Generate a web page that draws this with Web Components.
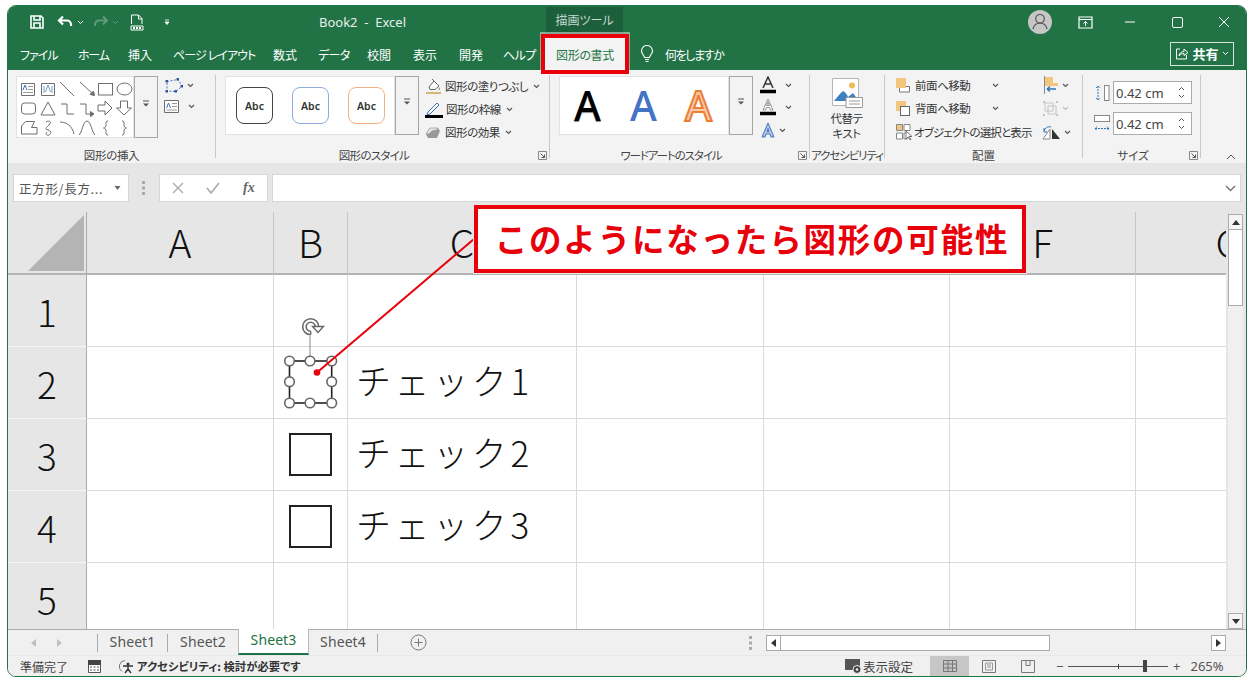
<!DOCTYPE html>
<html lang="ja"><head><meta charset="utf-8"><title>Book2 - Excel</title>
<style>
html,body{margin:0;padding:0;background:#fff;overflow:hidden}
body{font-family:"Noto Sans CJK JP","Noto Sans",sans-serif;font-feature-settings:"palt";color:#333}
</style></head><body>
<x-app>
  <x-titlebar></x-titlebar>
  <x-tabs></x-tabs>
  <x-ribbon>
    <x-group w="208" pl="8" label="図形の挿入" ls="-.3">
      <x-row style="margin-top:1px;align-items:flex-start"><x-gal w="118" h="62"><x-i n="shapes"></x-i></x-gal><x-more h="62"></x-more>
        <x-col style="margin:2px 0 0 6px;gap:7px">
          <x-row><x-i n="editpts"></x-i><x-i n="chev" style="margin-left:3px"></x-i></x-row>
          <x-row><x-i n="textbox"></x-i><x-i n="chev" style="margin-left:9px"></x-i></x-row>
        </x-col></x-row>
    </x-group>
    <x-group w="334" pl="9" label="図形のスタイル" launcher="1" ls="-.7">
      <x-row style="margin-top:1px;align-items:flex-start"><x-gal w="170" h="59"><x-row style="gap:19px;padding:10px 0 0 10px"><x-abc c="#444"></x-abc><x-abc c="#8faadc"></x-abc><x-abc c="#f4b183"></x-abc></x-row></x-gal><x-more h="59"></x-more>
        <x-col style="margin:-1px 0 0 6px;line-height:23px">
          <x-row><x-i n="fill"></x-i><span style="margin:0 5px 0 3px">図形の塗りつぶし</span><x-i n="chev"></x-i></x-row>
          <x-row><x-i n="pen"></x-i><span style="margin:0 5px 0 3px">図形の枠線</span><x-i n="chev"></x-i></x-row>
          <x-row><x-i n="effect"></x-i><span style="margin:0 5px 0 4px">図形の効果</span><x-i n="chev"></x-i></x-row>
        </x-col></x-row>
    </x-group>
    <x-group w="260" pl="9" label="ワードアートのスタイル" launcher="1" ls="-1.1">
      <x-row style="margin-top:1px;align-items:flex-start"><x-gal w="170" h="59"><x-wordart></x-wordart></x-gal><x-more h="59"></x-more>
        <x-col style="margin:0 0 0 7px;gap:4px">
          <x-row><x-i n="afill"></x-i><x-i n="chev" style="margin-left:9px"></x-i></x-row>
          <x-row><x-i n="aline"></x-i><x-i n="chev" style="margin-left:9px"></x-i></x-row>
          <x-row style="margin-top:2px"><x-i n="aeff"></x-i><x-i n="chev" style="margin-left:3px"></x-i></x-row>
        </x-col></x-row>
    </x-group>
    <x-group w="75" pl="0" label="アクセシビリティ" ls="-1.1">
      <x-col style="align-items:center;line-height:15px;margin-top:3px"><x-i n="alt"></x-i><span style="margin-top:3px;text-align:center;margin-right:1px">代替テ<br>キスト</span></x-col>
    </x-group>
    <x-group w="198" pl="11" label="配置" ls="0">
      <x-row style="align-items:flex-start">
        <x-col style="width:146px;line-height:23px;margin-top:-1px">
          <x-row style="height:23px"><x-i n="front"></x-i><span style="margin:0 0 0 5px;width:77px">前面へ移動</span><x-i n="chev"></x-i></x-row>
          <x-row style="height:23px"><x-i n="back"></x-i><span style="margin:0 0 0 5px;width:77px">背面へ移動</span><x-i n="chev"></x-i></x-row>
          <x-row style="height:24px"><x-i n="select"></x-i><span style="margin-left:1px;white-space:nowrap;letter-spacing:-.85px">オブジェクトの選択と表示</span></x-row>
        </x-col>
        <x-col style="gap:3px;margin-top:0">
          <x-row style="height:20px"><x-i n="align"></x-i><x-i n="chev" style="margin-left:3px"></x-i></x-row>
          <x-row style="height:20px"><x-i n="group"></x-i><x-i n="chevd" style="margin-left:3px"></x-i></x-row>
          <x-row style="height:20px;margin-top:1px"><x-i n="rotate"></x-i><x-i n="chev" style="margin-left:3px"></x-i></x-row>
        </x-col>
      </x-row>
    </x-group>
    <x-group w="118" pl="11" label="サイズ" launcher="1" ls="0">
      <x-col style="gap:8px;margin-top:6px">
        <x-row><x-i n="height"></x-i><x-spin style="margin-left:3px">0.42 cm</x-spin></x-row>
        <x-row><x-i n="width"></x-i><x-spin style="margin-left:3px">0.42 cm</x-spin></x-row>
      </x-col>
    </x-group>
    <x-i n="collapse" style="margin:79px 0 0 25px"></x-i>
  </x-ribbon>
  <x-formula></x-formula>
  <x-sheet>
    <x-shape style="left:281px;top:221px"></x-shape>
    <x-shape style="left:281px;top:293px"></x-shape>
    <x-marks></x-marks>
    <x-callout>このようになったら図形の可能性</x-callout>
  </x-sheet>
  <x-sheettabs></x-sheettabs>
  <x-status></x-status>
</x-app>
<script>
const S='fill="none" stroke="#6e6e6e"';
const I={
 save:[16,16,'<path d="M2 2h10l2 2v10H2z M5 2v4h6V2 M5 14V9h6v5" fill="none" stroke="#fff" stroke-width="1.6"/>'],
 undo:[16,14,'<path d="M2 5.5h8a4 4 0 0 1 4 4V11 M6 1.5 2 5.5l4 4" fill="none" stroke="#fff" stroke-width="2.2"/>'],
 redo:[16,14,'<path d="M14 5.5H6a4 4 0 0 0-4 4V11 M10 1.5l4 4-4 4" fill="none" stroke="#5d9c7b" stroke-width="2"/>'],
 chw:[7,5,'<path d="M1 1l2.5 2.5L6 1" fill="none" stroke="#fff" stroke-width="1"/>'],
 chg:[7,5,'<path d="M1 1l2.5 2.5L6 1" fill="none" stroke="#5d9c7b" stroke-width="1"/>'],
 doc:[14,17,'<path d="M1.5 10V1h7l3.5 3.5V10 M8.5 1v4H12" fill="none" stroke="#fff"/><path d="M1 12h12v4H1z" fill="none" stroke="#fff"/><path d="M3 13h2v2H3z M6 13h2v2H6z M9 13h2v2H9z" fill="#fff"/>'],
 qat:[6,7,'<path d="M1 1h4M1 3l2 2.5L5 3z" stroke="#fff" fill="#fff" stroke-width=".8"/>'],
 ropt:[15,13,'<path d="M1 1h13v11H1z M1 3.5h13" fill="none" stroke="#fff" stroke-width="1.2"/><path d="M7.5 10V5.5M5.5 7.5l2-2 2 2" fill="none" stroke="#fff"/>'],
 min:[12,2,'<path d="M1 1h10" stroke="#fff"/>'],
 max:[11,11,'<rect x=".5" y=".5" width="10" height="10" rx="1.5" fill="none" stroke="#fff"/>'],
 close:[12,12,'<path d="M1 1l10 10M11 1 1 11" stroke="#fff" stroke-width="1"/>'],
 user:[24,24,'<circle cx="12" cy="12" r="12" fill="#c6c6c6"/><circle cx="12" cy="8.8" r="4.3" fill="none" stroke="#555" stroke-width="1.2"/><path d="M5 19c1-4 4-6 7-6s6 2 7 6" fill="none" stroke="#555" stroke-width="1.2"/>'],
 bulb:[14,18,'<path d="M4.5 12.5C4 10 1.5 9 1.5 6a5.5 5.5 0 0 1 11 0c0 3-2.5 4-3 6.5z M5 14.5h4 M5.5 16.5h3" fill="none" stroke="#fff" stroke-width="1.1"/>'],
 share:[14,13,'<path d="M5 2H1.5v10h10V8" fill="none" stroke="#fff"/><path d="M4 9c0-3 3-4.5 5-4.5V2l4 3.5-4 3V6.5C7 6.5 5 7 4 9z" fill="none" stroke="#fff"/>'],
 chev:[7,5,'<path d="M1 1l2.5 2.5L6 1" fill="none" stroke="#555" stroke-width="1.1"/>'],
 chevd:[7,5,'<path d="M1 1l2.5 2.5L6 1" fill="none" stroke="#bbb" stroke-width="1.1"/>'],
 shapes:[118,62,`<g ${S}>
  <path d="M4.5 6.5h13v12h-13z" fill="#fff"/><path d="M11 9.5h5M11 12.5h5M6 15.5h10" stroke="#999"/><path d="M6 13l2-5 2 5" stroke="#4472c4"/>
  <path d="M24.5 6.5h13v12h-13z"/><path d="M27 9v7M35 9v7M28.5 15l2.5-7 2.5 7" stroke="#7a9ac8"/>
  <path d="M43 5l14 14M63 5l14 13"/><path d="M77.5 18.5l-4.5-1 3.5-3.5z" fill="#6e6e6e"/>
  <rect x="81.5" y="6.5" width="14" height="11.5"/><ellipse cx="107.5" cy="12" rx="7.5" ry="6"/>
  <rect x="4.5" y="26" width="14" height="11" rx="3"/><path d="M31 25l-7 13h14z"/><path d="M44 27h6v10h7M63 27h6v10h5"/><path d="M77 37l-3.5-2.5v5z" fill="#6e6e6e"/>
  <path d="M81 28h7v-4l7 7-7 7v-4h-7z"/><path d="M103.5 24h7v7h4l-7.5 7-7.5-7h4z"/>
  <path d="M4.5 57v-8l4-4.5h9l-3 6h5.5V57z"/><path d="M29 45c4-2 6 0 3 3s-5 4-1 5 3 4 1 5-4-1-2-3"/><path d="M43 45c7 0 12 4 14 12M62 58c3-2 4-14 8-14s5 12 8 14"/>
  <path d="M91 44c-2.5 0-2 1.5-2 3.5s-.5 3.5-2.5 3.5c2 0 2.5 1.5 2.5 3.5s-.5 3.5 2 3.5M105 44c2.5 0 2 1.5 2 3.5s.5 3.5 2.5 3.5c-2 0-2.5 1.5-2.5 3.5s.5 3.5-2 3.5"/></g>`],
 editpts:[20,15,'<path d="M3 3.5 14 1.5l4 6.5-6 5.5L3 13z" fill="none" stroke="#4472c4" stroke-dasharray="2 1.5"/><g fill="#2f5597"><rect x="1.5" y="2" width="2.5" height="2.5"/><rect x="12.5" y="0" width="2.5" height="2.5"/><rect x="16.5" y="7" width="2.5" height="2.5"/><rect x="10.5" y="12" width="2.5" height="2.5"/><rect x="1.5" y="12" width="2.5" height="2.5"/></g>'],
 textbox:[15,13,'<path d="M.5.5h14v12H.5z" fill="#fff" stroke="#6e6e6e"/><path d="M2.5 8l2-5 2 5" fill="none" stroke="#4472c4"/><path d="M8 3.5h5M8 6.5h5M2.5 10h10.5" stroke="#999"/>'],
 fill:[17,17,'<path d="M4 9l5-6 5 5-4 3.5H5z" fill="#fff" stroke="#666"/><path d="M9 3 7 1" stroke="#666"/><path d="M14 9c1 1.5 1.5 2 1 3-1 .5-1.5-1-1-3z" fill="#888"/><path d="M1 15h15" stroke="#c8a04a" stroke-width="1.5"/>'],
 pen:[18,17,'<path d="M3 11 12 2l2 2-9 9-3 1z" fill="#fff" stroke="#3b6fb6"/><path d="M0 15.5h18" stroke="#000" stroke-width="3"/>'],
 effect:[16,14,'<path d="M5 2h8l2 3-3 7H3L1 8z" fill="#999"/><path d="M5 2h8l-1 2-5 1-3 3-3 0z" fill="#e6e6e6" stroke="#888" stroke-width=".6"/>'],
 afill:[16,18,'<path d="M3 12 8 1l5 11M5 8h6" fill="none" stroke="#333" stroke-width="1.5"/><path d="M0 15.5h16" stroke="#000" stroke-width="3.5"/>'],
 aline:[16,18,'<path d="M3 12 8 1l5 11-2.5 0-1-2.5h-3L5.5 12zM6.5 7.5h3L8 4z" fill="#fff" stroke="#888" stroke-width=".9"/><path d="M0 15.5h16" stroke="#000" stroke-width="3.5"/>'],
 aeff:[16,17,'<path d="M2 15 8 1l6 14h-3l-1-3H6l-1 3zM7 9.5h2L8 6.5z" fill="#b4c7e7" stroke="#4472c4" stroke-width="1"/>'],
 alt:[31,30,'<path d="M.5.5h26v27H.5z" fill="#fff" stroke="#b5b5b5"/><circle cx="20" cy="7.5" r="3" fill="#f0b95c"/><path d="M2 23c3-3 5-7 9-10 2 1 4 3 5 6l5-4 5 7v1H2z" fill="#3f7fc1"/><path d="M14 19.5h16.5v10H14z" fill="#fff" stroke="#9a9a9a"/><path d="M17 23h11M17 26h11" stroke="#9a9a9a"/>'],
 front:[14,15,'<path d="M8 8.5h5.5V14H3.5V9" fill="#fff" stroke="#777"/><rect x="0" y="0" width="10" height="10" fill="#f2c77d"/>'],
 back:[14,15,'<rect x="0" y="0" width="10" height="10" fill="#f2c77d"/><rect x="4.5" y="5.5" width="9" height="9" fill="#fff" stroke="#666"/>'],
 select:[17,16,'<path d="M.5.5h6v6h-6z" fill="#f2c77d" stroke="#888"/><path d="M8 .5h6v6H8zM.5 9h6v6h-6zM8 9h3v6H8z" fill="#fff" stroke="#888"/><path d="M10 7v8l2-2 2 3 1-.5-2-3h3z" fill="#fff" stroke="#555" stroke-width=".8"/>'],
 align:[17,18,'<path d="M2.5 0v18" stroke="#888"/><rect x="3" y="1" width="8" height="6" fill="#f2c77d"/><rect x="3" y="7" width="13" height="3" fill="#f2c77d"/><path d="M5 13h9M5 13l3-2.5M5 13l3 2.5" stroke="#2e75b6" stroke-width="1.5" fill="none"/>'],
 group:[17,17,'<path d="M3 3h8v8H3zM6 6h8v8H6z" fill="none" stroke="#c4c4c4"/><g fill="#c4c4c4"><rect x="1" y="1" width="2" height="2"/><rect x="14" y="1" width="2" height="2"/><rect x="1" y="14" width="2" height="2"/><rect x="14" y="14" width="2" height="2"/></g>'],
 rotate:[19,15,'<path d="M1 14 8 4v10z" fill="#fff" stroke="#888"/><path d="M10 14V4l8 10z" fill="#333"/><path d="M2 6c1-3 4-5 7-4" fill="none" stroke="#2e75b6"/><path d="M2 3v4h3" fill="none" stroke="#2e75b6"/>'],
 height:[16,16,'<path d="M4 1v14M2 3l2-2 2 2M2 13l2 2 2-2" fill="none" stroke="#2e75b6" stroke-dasharray="2 1"/><rect x="10.5" y=".5" width="4.5" height="15" fill="#fff" stroke="#888"/>'],
 width:[16,18,'<rect x=".5" y=".5" width="15" height="6" fill="#fff" stroke="#888"/><path d="M1 13.5h14M3 11.5l-2 2 2 2M13 11.5l2 2-2 2" fill="none" stroke="#2e75b6" stroke-dasharray="2 1"/>'],
 collapse:[10,6,'<path d="M1 5l4-4 4 4" fill="none" stroke="#555"/>'],
 launch:[9,9,'<path d="M.5 8.5V.5h8v8z" fill="none" stroke="#888"/><path d="M2.5 2.5l4 4M3.5 6.5h3v-3" fill="none" stroke="#555"/>'],
 moreic:[8,7,'<path d="M1 1h6" stroke="#555"/><path d="M1 3.5h6L4 6.5z" fill="#555"/>'],
 dn:[7,4,'<path d="M.5 0h6L3.5 4z" fill="#666"/>'],
 dots:[3,16,'<g fill="#aaa"><rect y="1" width="3" height="3"/><rect y="6.5" width="3" height="3"/><rect y="12" width="3" height="3"/></g>'],
 x:[14,14,'<path d="M2 2l10 10M12 2 2 12" stroke="#a8a8a8" stroke-width="1.3"/>'],
 check:[16,14,'<path d="M2 7l4 5 8-10" fill="none" stroke="#a8a8a8" stroke-width="1.6"/>'],
 chevbig:[11,7,'<path d="M1 1l4.5 4.5L10 1" fill="none" stroke="#777" stroke-width="1.5"/>'],
 up:[8,5,'<path d="M4 0l4 5H0z" fill="#333"/>'],
 down:[8,5,'<path d="M0 0h8L4 5z" fill="#333"/>'],
 left:[5,8,'<path d="M5 0v8L0 4z" fill="#333"/>'],
 right:[5,8,'<path d="M0 0v8l5-4z" fill="#333"/>'],
 navl:[5,8,'<path d="M5 0v8L0 4z" fill="#c0c0c0"/>'],
 navr:[5,8,'<path d="M0 0v8l5-4z" fill="#c0c0c0"/>'],
 plus:[17,17,'<circle cx="8.5" cy="8.5" r="7.5" fill="none" stroke="#777"/><path d="M4.5 8.5h8M8.5 4.5v8" stroke="#777"/>'],
 macro:[13,13,'<path d="M.5 2.5h12v10H.5z" fill="#fff" stroke="#555"/><path d="M0 0h13v5H0z" fill="#444"/><path d="M2 7h2M5.5 7h2M9 7h2M2 10h2M5.5 10h2M9 10h2" stroke="#555"/>'],
 acc:[17,15,'<path d="M7 1.5a6 6 0 0 0-3 11" fill="none" stroke="#777"/><circle cx="10" cy="5" r="1.5" fill="#333"/><path d="M5 7h10M10 7v3l-3 4M10 10l3 4" fill="none" stroke="#333" stroke-width="1.4"/>'],
 disp:[17,15,'<path d="M0 0h15v11H0z" fill="#555"/><circle cx="12" cy="10.5" r="4" fill="#444" stroke="#f0f0f0"/><circle cx="12" cy="10.5" r="1.3" fill="#f0f0f0"/>'],
 vnorm:[14,12,'<path d="M.5.5h13v11H.5zM.5 4h13M.5 8h13M5 .5v11M9.5.5v11" fill="none" stroke="#777"/>'],
 vpage:[14,13,'<path d="M.5.5h13v12H.5z" fill="none" stroke="#777"/><path d="M3.5 3h7v7h-7zM5 5h4M5 7h4" fill="none" stroke="#999"/>'],
 vbreak:[14,13,'<path d="M.5 12.5V.5h13v12zM5 .5v5h4v-5" fill="none" stroke="#777"/>']
};
const RED='#e8000a';
const def=(n,css,html)=>customElements.define(n,class extends HTMLElement{
  connectedCallback(){ if(this.shadowRoot) return; const s=this.attachShadow({mode:'open'});
    s.innerHTML='<style>'+css+'</style>'+(typeof html==='function'?html(this):html); }});
const ic=(n,st='')=>`<x-i n="${n}"${st?` style="${st}"`:''}></x-i>`;

def('x-i',':host{display:inline-flex;flex:none;line-height:0}svg{display:block}',h=>{const a=I[h.getAttribute('n')];return `<svg xmlns="http://www.w3.org/2000/svg" width="${a[0]}" height="${a[1]}" viewBox="0 0 ${a[0]} ${a[1]}">${a[2]}</svg>`});
def('x-row',':host{display:flex;align-items:center}','<slot></slot>');
def('x-col',':host{display:flex;flex-direction:column}','<slot></slot>');

def('x-app',`:host{display:flex;flex-direction:column;box-sizing:border-box;width:1240px;height:672px;margin:5px 0 0 7px;border:1px solid #217346;border-radius:9px;overflow:hidden;background:#e6e6e6;position:relative}`,'<slot></slot>');

def('x-titlebar',`:host{display:flex;align-items:center;height:32px;background:#217346;color:#fff;font-size:13px;flex:none}
 .t{font-family:"Noto Sans",sans-serif;white-space:pre;margin-left:149px;width:227px;font-size:13px;color:#e8f0eb}
 .ctx{width:77px;height:31px;align-self:flex-end;background:#1c5f3b;color:#c5d9ce;font-size:12px;display:flex;align-items:center;justify-content:center;padding-bottom:7px;box-sizing:border-box;font-family:"Noto Sans CJK JP",sans-serif}`,
 `<span style="width:21px"></span>${ic('save')}${ic('undo','margin-left:12px')}${ic('chw','margin-left:4px')}${ic('redo','margin-left:9px')}${ic('chg','margin-left:3px')}${ic('doc','margin-left:11px')}${ic('qat','margin-left:20px')}
 <span class="t">Book2  -  Excel</span><span class="ctx">描画ツール</span>
 ${ic('user','margin-left:405px')}${ic('ropt','margin-left:26px')}${ic('min','margin-left:31px')}${ic('max','margin-left:36px')}${ic('close','margin-left:35px')}`);

def('x-tabs',`:host{display:flex;align-items:center;height:32px;background:#217346;color:#fff;font-size:12px;padding-left:12px;flex:none;position:relative;z-index:3}
 span{display:block;white-space:nowrap;padding-top:1px}
 .a{width:84px;height:32px;margin-left:0;background:#f3f3f3;color:#217346;display:flex;align-items:center;justify-content:center;position:relative;box-sizing:border-box;padding:1px 0 0 0;letter-spacing:-.3px}
 .a::after{content:"";position:absolute;left:-2px;right:-2px;top:-4px;bottom:-4px;border:4px solid ${RED};box-shadow:0 -1px 0 1px rgba(255,255,255,.45)}
 .b{margin-left:auto;margin-right:12px;width:64px;height:24px;border:1px solid #d5e3db;box-sizing:border-box;display:flex;align-items:center;justify-content:center;gap:3px;font-size:13px;font-weight:700;margin-top:-1px;padding:0}`,
 ()=>[['ファイル',58,-1],['ホーム',50,-1.2],['挿入',45,0],['ページ レイアウト',100,-.9],['数式',45,0],['データ',49,-.6],['校閲',46,0],['表示',46,0],['開発',44,0],['ヘルプ',40,-.6]].map(([t,w,l])=>`<span style="width:${w}px;letter-spacing:${l}px">${t}</span>`).join('')+
 `<span class="a">図形の書式</span>${ic('bulb','margin-left:13px')}<span style="margin-left:11px;letter-spacing:-1.4px">何をしますか</span><span class="b">${ic('share')}共有${ic('chw')}</span>`);

def('x-ribbon',`:host{display:flex;align-items:flex-start;height:93px;background:#f3f3f3;flex:none;padding-top:5px;box-sizing:border-box;color:#333}`,'<slot></slot>');

def('x-group',`:host{display:flex;flex-direction:column;height:83px;box-sizing:border-box;border-right:1px solid #c8c8c8;flex:none;font-size:11.5px;letter-spacing:-.45px}
 .c{flex:1;min-height:0} .l{font-size:11.5px;line-height:16px;height:16px;margin:0 -1px -5px -1px;text-align:center;position:relative;white-space:nowrap;color:#444}
 .l x-i{position:absolute;right:3px;top:4px}`,
 h=>`<style>:host{width:${h.getAttribute('w')}px}.c{padding-left:${h.getAttribute('pl')}px}.l{letter-spacing:${h.getAttribute('ls')||0}px;${h.getAttribute('launcher')?'padding-right:17px;':''}}</style><div class="c"><slot></slot></div><div class="l">${h.getAttribute('label')}${h.getAttribute('launcher')?ic('launch'):''}</div>`);

def('x-gal',`:host{display:block;background:#fff;border:1px solid #e2e2e2;box-sizing:border-box;flex:none;overflow:hidden}`,
 h=>`<style>:host{width:${h.getAttribute('w')}px;height:${h.getAttribute('h')}px}</style><slot></slot>`);
def('x-more',`:host{display:flex;flex:none;width:24px;align-items:center;justify-content:center;border:1px solid #a6a6a6;box-sizing:border-box;background:#f3f3f3;padding-bottom:8px}`,
 h=>`<style>:host{height:${h.getAttribute('h')}px}</style>${ic('moreic')}`);
def('x-abc',`:host{display:flex;width:37px;height:37px;box-sizing:border-box;border-radius:8px;background:#fff;align-items:center;justify-content:center;font:600 10.5px "Noto Sans",sans-serif;letter-spacing:0;color:#333;flex:none}`,
 h=>`<style>:host{border:1.3px solid ${h.getAttribute('c')}}</style>Abc`);
def('x-wordart',`:host{display:flex;font:500 41px/56px "Noto Sans",sans-serif;letter-spacing:0;padding-left:14px;gap:30px}
 span{width:26px;display:block;text-align:center}`,
 `<span style="color:#000;text-shadow:0 1px 1px #888">A</span><span style="color:#4472c4;margin-left:0">A</span><span style="color:#f8cbad;-webkit-text-stroke:2px #ed7d31;margin-left:-1px">A</span>`);
def('x-spin',`:host{display:flex;align-items:center;width:79px;height:23px;box-sizing:border-box;border:1px solid #ababab;background:#fff;font:13px "Noto Sans",sans-serif;letter-spacing:0;padding-left:2px;color:#444;position:relative}
 i{margin-left:auto;margin-right:6px;display:flex;flex-direction:column;gap:3px}`,
 `<slot></slot><i><svg width="7" height="5"><path d="M1 4l2.5-2.5L6 4" fill="none" stroke="#555"/></svg><svg width="7" height="5"><path d="M1 1l2.5 2.5L6 1" fill="none" stroke="#555"/></svg></i>`);

def('x-formula',`:host{display:flex;height:49px;box-sizing:border-box;padding:11px 5px 10px 5px;background:#e6e6e6;flex:none}
 div{box-sizing:border-box;background:#fff;border:1px solid #d6d6d6;height:28px;display:flex;align-items:center}
 .n{width:116px;font-size:12.5px;color:#555;padding:0 7px 0 5px;justify-content:space-between;white-space:nowrap;letter-spacing:.7px;font-feature-settings:normal}
 .b{width:109px;padding-left:11px;gap:20px}
 .f{flex:1;margin-left:4px;justify-content:flex-end;padding-right:4px}
 em{font:italic 700 14px "Liberation Serif",serif;color:#666;margin-left:2px}`,
 `<div class="n"><span>正方形/長方...</span>${ic('dn')}</div>${ic('dots','margin:6px 14px 0 13px;height:16px')}<div class="b">${ic('x')}${ic('check')}<em>fx</em></div><div class="f">${ic('chevbig')}</div>`);

def('x-sheet',`:host{display:flex;height:417px;flex:none;position:relative;background:#e6e6e6}
 .w{width:1218px;height:417px;overflow:hidden;flex:none}
 .g{display:grid;grid-template-columns:79px 187px 74px 229px 187px 186px 186px 186px;grid-template-rows:63px 72px 72px 72px 72px 66px;width:1314px;font-family:"Noto Sans CJK JP","Noto Sans",sans-serif;color:#111}
 .g>div{box-sizing:border-box;display:flex;align-items:center;overflow:visible;white-space:nowrap}
 .h{background:#e6e6e6;justify-content:center;font:300 39px "Noto Sans CJK JP","Noto Sans",sans-serif}
 .ch{border-right:1px solid #c6c6c6;border-bottom:2px solid #b4b4b4;padding-bottom:4px}
 .rh{border-right:1px solid #aaa;border-bottom:1px solid #f5f5f5;font-size:37px}
 .c{background:#fff;border-right:1px solid #d9d9d9;border-bottom:1px solid #d9d9d9}
 .c.last{border-bottom:0}.rh.last{border-bottom:0;align-items:flex-end!important;padding-bottom:3px}
 .t{font:300 35px "Noto Sans CJK JP",sans-serif;font-feature-settings:normal;padding:0 0 6px 8px;letter-spacing:3.6px;width:228px}
 .sb{width:20px;flex:none;box-sizing:border-box;padding:2px 3px 0 2px;display:flex;flex-direction:column}
 .btn{height:16px;background:#f5f5f5;border:1px solid #ababab;box-sizing:border-box;display:flex;align-items:center;justify-content:center;flex:none;padding:0}
 .th{height:76px;background:#fff;border:1px solid #ababab;border-top:0;box-sizing:border-box;flex:none}
 .tr{flex:1;background:#f0f0f0}`,
 ()=>{const cols=['A','B','C','D','E','F','G'];
  let g=`<div class="h ch" style="border-right:1px solid #aaa;justify-content:flex-end;padding:0 1px 0 0;align-items:flex-end"><svg width="58" height="58" style="margin:0 0 1px 0"><path d="M57 1v56H1z" fill="#b4b4b4"/></svg></div>`;
  cols.forEach(c=>g+=`<div class="h ch">${c}</div>`);
  const txt={2:'チェック1',3:'チェック2',4:'チェック3'};
  for(let r=1;r<=5;r++){const l=r==5?' last':'';g+=`<div class="h rh${l}">${r}</div>`;
   cols.forEach(c=>g+=`<div class="c${l}">${c=='C'&&txt[r]?`<span class="t">${txt[r]}</span>`:''}</div>`);}
  return `<div class="w"><div class="g">${g}</div></div><div class="sb"><div class="btn">${ic('up')}</div><div class="th"></div><div class="tr"></div><div class="btn">${ic('down')}</div></div><slot></slot>`});

def('x-shape',`:host{position:absolute;width:43px;height:43px;box-sizing:border-box;border:2px solid #222;background:#fff}`,'');
def('x-marks',`:host{position:absolute;left:0;top:0;pointer-events:none}svg{display:block;overflow:visible}`,
 ()=>{const X=[281.5,302,323.7],Y=[149,169.7,191];let h='';
  Y.forEach((y,j)=>X.forEach((x,i)=>{if(!(i==1&&j==1))h+=`<circle cx="${x}" cy="${y}" r="4.8" fill="#fff" stroke="#666" stroke-width="1.6"/>`}));
  return `<svg width="1238" height="417"><rect x="281.5" y="149" width="42.2" height="42" fill="#fff" stroke="#222" stroke-width="1.6"/>
  <path d="M302 124v25" stroke="#888"/>
  <path d="M302.7 122.7a8 8 0 1 1 8-8" fill="none" stroke="#666" stroke-width="1.6"/><path d="M302.7 119.2a4.5 4.5 0 1 1 4.5-4.5" fill="none" stroke="#666" stroke-width="1.6"/><path d="M302.7 122.7v-3.5" stroke="#666" stroke-width="1.4"/><path d="M304.5 114.5h11l-5.5 6z" fill="#fff" stroke="#666" stroke-width="1.4"/>${h}
  <path d="M309 160.5 466 27" stroke="${RED}" stroke-width="2"/><circle cx="309" cy="160.5" r="3.3" fill="${RED}"/></svg>`});
def('x-callout',`:host{position:absolute;left:466px;top:-7px;width:552px;height:68px;box-sizing:border-box;border:4px solid ${RED};background:#fff;outline:1px solid #e8e8e8;color:${RED};font:700 32.5px "Noto Sans CJK JP",sans-serif;font-feature-settings:normal;display:flex;align-items:center;justify-content:center;white-space:nowrap;letter-spacing:1.8px;padding:0 0 4px 4px}`,'<slot></slot>');

def('x-sheettabs',`:host{display:flex;align-items:center;height:26px;flex:none;background:#f0f0f0;border-top:1px solid #ababab;box-sizing:border-box;font:14px "Noto Sans",sans-serif;letter-spacing:.1px;color:#555;position:relative}
 .s{box-sizing:border-box;display:flex;align-items:center;justify-content:center;border-right:1px solid #aaa;flex:none;height:18px;padding-bottom:2px}
 .a{width:71px;height:26px;margin-top:-1px;background:#fff;color:#217346;border-bottom:2px solid #217346;display:flex;align-items:center;justify-content:center;border-left:1px solid #bbb;border-right:1px solid #bbb;box-sizing:border-box;padding-bottom:3px;flex:none}
 .bar{width:461px;height:16px;display:flex;flex:none}
 .bt{width:15px;height:16px;background:#fff;border:1px solid #ababab;box-sizing:border-box;display:flex;align-items:center;justify-content:center;flex:none}
 .th{width:269px;background:#fff;border:1px solid #ababab;border-left:0;box-sizing:border-box}
 .tk{width:161px;background:#f0f0f0}`,
 `${ic('navl','margin-left:23px')}${ic('navr','margin-left:21px')}<span class="s" style="width:36px"></span>
  <span class="s" style="width:70px">Sheet1</span><span class="s" style="width:70px;border:0">Sheet2</span><span class="a">Sheet3</span><span class="s" style="width:69px">Sheet4</span>
  ${ic('plus','margin-left:32px')}${ic('dots','margin-left:322px')}<span style="width:14px"></span>
  <div class="bar"><div class="bt">${ic('left')}</div><div class="th"></div><div class="tk"></div><div class="bt">${ic('right')}</div></div>`);

def('x-status',`:host{display:flex;align-items:center;flex:1;background:#f0f0f0;font-size:12px;color:#444;white-space:nowrap;min-height:0;border-top:1px solid #e8e8e8;box-sizing:border-box}
 b{font-weight:700;color:#333;margin-left:2px;width:708px;display:block;font-size:11.3px}
 .v{width:39px;align-self:stretch;display:flex;align-items:center;justify-content:center}
 .z{width:100px;height:1px;background:#555;position:relative;margin:0 5px}
 .z i{position:absolute;background:#444}
 .n{font:13px "Noto Sans",sans-serif;color:#555}`,
 `<span style="margin-left:12px">準備完了</span>${ic('macro','margin-left:20px')}${ic('acc','margin-left:17px')}<b>アクセシビリティ: 検討が必要です</b>
  ${ic('disp')}<span style="margin-left:1px;width:67px;font-size:12.5px">表示設定</span>
  <span class="v" style="background:#c6c6c6">${ic('vnorm')}</span><span class="v">${ic('vpage')}</span><span class="v">${ic('vbreak')}</span>
  <span class="n" style="margin-left:9px;width:4px">−</span><span style="width:3px"></span><span class="z"><i style="left:50%;top:-2px;width:1px;height:5px"></i><i style="left:75px;top:-6px;width:4px;height:12px"></i></span><span class="n" style="margin-left:0">+</span><span class="n" style="margin-left:10px">265%</span>`);
</script>
</body></html>
